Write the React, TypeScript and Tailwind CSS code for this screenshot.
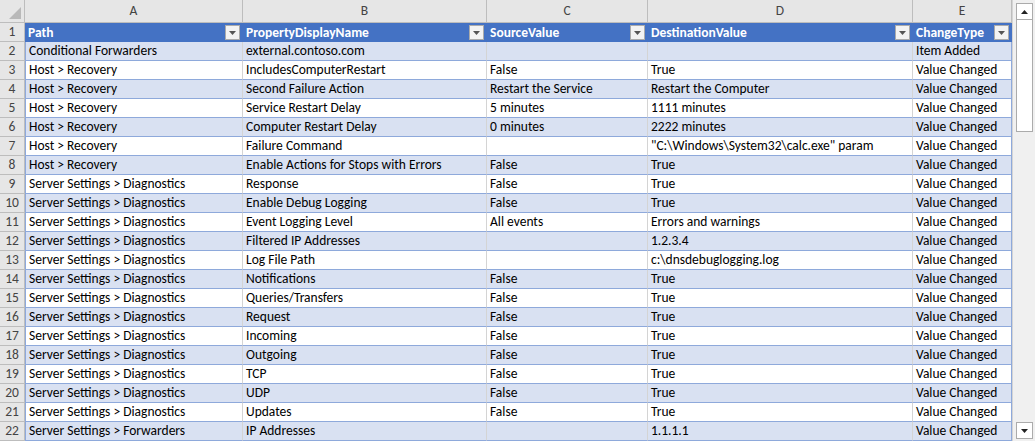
const rows: string[][] = [
  ["Conditional Forwarders", "external.contoso.com", "", "", "Item Added"],
  ["Host > Recovery", "IncludesComputerRestart", "False", "True", "Value Changed"],
  ["Host > Recovery", "Second Failure Action", "Restart the Service", "Restart the Computer", "Value Changed"],
  ["Host > Recovery", "Service Restart Delay", "5 minutes", "1111 minutes", "Value Changed"],
  ["Host > Recovery", "Computer Restart Delay", "0 minutes", "2222 minutes", "Value Changed"],
  ["Host > Recovery", "Failure Command", "", "\"C:\\Windows\\System32\\calc.exe\" param", "Value Changed"],
  ["Host > Recovery", "Enable Actions for Stops with Errors", "False", "True", "Value Changed"],
  ["Server Settings > Diagnostics", "Response", "False", "True", "Value Changed"],
  ["Server Settings > Diagnostics", "Enable Debug Logging", "False", "True", "Value Changed"],
  ["Server Settings > Diagnostics", "Event Logging Level", "All events", "Errors and warnings", "Value Changed"],
  ["Server Settings > Diagnostics", "Filtered IP Addresses", "", "1.2.3.4", "Value Changed"],
  ["Server Settings > Diagnostics", "Log File Path", "", "c:\\dnsdebuglogging.log", "Value Changed"],
  ["Server Settings > Diagnostics", "Notifications", "False", "True", "Value Changed"],
  ["Server Settings > Diagnostics", "Queries/Transfers", "False", "True", "Value Changed"],
  ["Server Settings > Diagnostics", "Request", "False", "True", "Value Changed"],
  ["Server Settings > Diagnostics", "Incoming", "False", "True", "Value Changed"],
  ["Server Settings > Diagnostics", "Outgoing", "False", "True", "Value Changed"],
  ["Server Settings > Diagnostics", "TCP", "False", "True", "Value Changed"],
  ["Server Settings > Diagnostics", "UDP", "False", "True", "Value Changed"],
  ["Server Settings > Diagnostics", "Updates", "False", "True", "Value Changed"],
  ["Server Settings > Forwarders", "IP Addresses", "", "1.1.1.1", "Value Changed"],
];

const headers = ["Path", "PropertyDisplayName", "SourceValue", "DestinationValue", "ChangeType"];
const letters = ["A", "B", "C", "D", "E"];
const widths = ["w-[218px]", "w-[244px]", "w-[161px]", "w-[265px]", "w-[99px]"];

function Filter() {
  return (
    <span className="absolute right-[2px] top-[2px] w-[15px] h-[15px] bg-[#f3f3f3] border border-[#ababab] flex items-center justify-center">
      <svg width="7" height="4" viewBox="0 0 7 4"><path d="M0 0h7L3.5 4z" fill="#555" /></svg>
    </span>
  );
}

export default function App() {
  return (
    <div className="flex w-[1035px] h-[441px] overflow-hidden bg-white text-[13.5px] text-black" style={{ fontFamily: "Calibri, Carlito, 'Liberation Sans', sans-serif" }}>
      <div className="flex flex-col">
        <div className="flex h-[23px] bg-[#e6e6e6]">
          <div className="w-[25px] border-r border-b border-[#bdbdbd] relative">
            <svg className="absolute right-[3px] bottom-[3px]" width="12" height="12" viewBox="0 0 12 12"><path d="M12 0V12H0z" fill="#b9b9b9" /></svg>
          </div>
          {letters.map((l, i) => (
            <div key={l} className={`${widths[i]} border-r border-b border-[#bdbdbd] flex items-center justify-center text-[#444]`}>{l}</div>
          ))}
        </div>
        <div className="flex h-[19px]">
          <div className="w-[25px] bg-[#e6e6e6] border-r border-b border-[#bdbdbd] flex items-center justify-center text-[#444]">1</div>
          {headers.map((h, i) => (
            <div key={h} className={`${widths[i]} relative bg-[#4472c4] text-white font-bold pl-[3px] leading-[19px] whitespace-nowrap overflow-hidden border-r border-[#4472c4]`}>
              {h}
              <Filter />
            </div>
          ))}
        </div>
        {rows.map((r, ri) => (
          <div key={ri} className="flex h-[19px]">
            <div className="w-[25px] bg-[#e6e6e6] border-r border-b border-[#bdbdbd] flex items-center justify-center text-[#444]">{ri + 2}</div>
            {r.map((c, ci) => (
              <div
                key={ci}
                className={`${widths[ci]} ${ri % 2 === 0 ? "bg-[#d9e1f2]" : "bg-white"} border-b border-[#8ea9db] ${ci === 4 ? "border-r border-r-[#8ea9db]" : "border-r border-r-[#d4d4d4]"} ${ci === 0 ? "border-l border-l-[#8ea9db]" : ""} pl-[3px] leading-[18px] whitespace-nowrap overflow-hidden`}
              >
                {c}
              </div>
            ))}
          </div>
        ))}
      </div>
      <div className="flex-1 flex flex-col bg-[#f0f0f0] border-l border-[#d4d4d4] items-center">
        <div className="w-[17px] h-[17px] mt-[3px] bg-white border border-[#ababab] flex items-center justify-center">
          <svg width="7" height="4" viewBox="0 0 7 4"><path d="M0 4h7L3.5 0z" fill="#222" /></svg>
        </div>
        <div className="w-[17px] h-[112px] bg-white border border-[#ababab] border-t-0"></div>
        <div className="flex-1" />
        <div className="w-[17px] h-[17px] mb-[2px] bg-white border border-[#ababab] flex items-center justify-center">
          <svg width="7" height="4" viewBox="0 0 7 4"><path d="M0 0h7L3.5 4z" fill="#222" /></svg>
        </div>
      </div>
    </div>
  );
}
